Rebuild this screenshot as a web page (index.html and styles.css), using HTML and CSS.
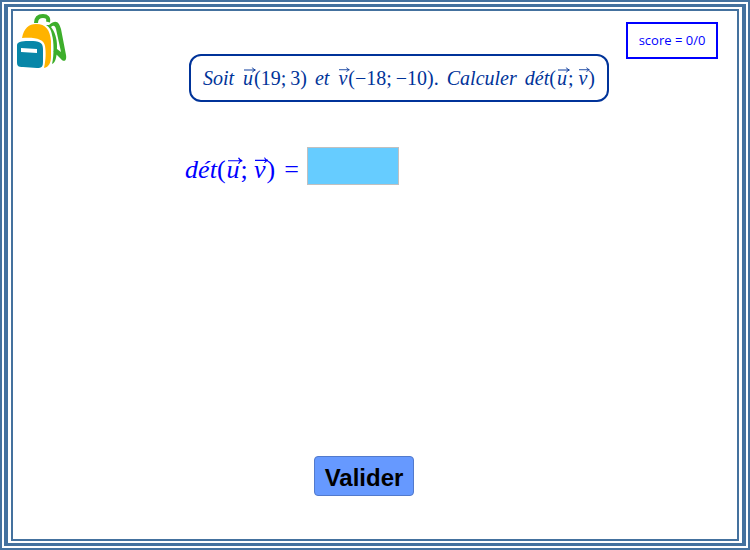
FILE: index.html
```html
<!DOCTYPE html>
<html lang="fr">
<head>
<meta charset="utf-8">
<title>Déterminant de deux vecteurs</title>
<link rel="stylesheet" href="styles.css">
</head>
<body>
<div class="frame"><div class="frame-band">
<main class="sheet">
  <header class="top">
    <svg class="logo" viewBox="0 0 52 58" aria-hidden="true">
      <path d="M20 11C20 6 23 4 27 4C31 4 33 6 32 10" fill="none" stroke="#3dae2b" stroke-width="4"/>
      <path d="M33 13C40 7 43 10 45 17L50 43C51 49 48 51 44 46L37 39L41 37L45 40L40 17C39 13 37 13 35 15C39 20 41 27 41 34C41 43 40 51 36 52C38 44 38 29 36 23C35 17 33 15 30 13Z" fill="#3dae2b"/>
      <path d="M6 26C8 16 13 12 20 12C30 12 34 18 35 29L35 44C35 51 33 55 28 56C30 47 30 40 29 34C28 27 19 25 6 26Z" fill="#ffb300"/>
      <path d="M1 33C1 29 9 29 14 29C23 29 27 30 27 37L27 49C27 55 26 56 21 56L7 55C2 55 1 54 1 50Z" fill="#0786a8"/>
      <path d="M5 36L21 37L21 41L5 40Z" fill="#fff"/>
    </svg>
    <h1 class="question">
      <span>Soit</span>
      <span><span class="vec">u<svg viewBox="0 0 10 5" aria-hidden="true"><path d="M0 2.500H9M7 .5Q7.500 2 9.500 2.500Q7.500 3 7 4.500"/></svg></span><span class="num">(19;&thinsp;3)</span></span>
      <span>et</span>
      <span><span class="vec">v<svg viewBox="0 0 10 5" aria-hidden="true"><path d="M0 2.500H9M7 .5Q7.500 2 9.500 2.500Q7.500 3 7 4.500"/></svg></span><span class="num">(−18;&thinsp;−10).</span></span>
      <span>Calculer</span>
      <span>dét<span class="num">(</span><span class="vec">u<svg viewBox="0 0 10 5" aria-hidden="true"><path d="M0 2.500H9M7 .5Q7.500 2 9.500 2.500Q7.500 3 7 4.500"/></svg></span><span class="num">;&thinsp;</span><span class="vec">v<svg viewBox="0 0 10 5" aria-hidden="true"><path d="M0 2.500H9M7 .5Q7.500 2 9.500 2.500Q7.500 3 7 4.500"/></svg></span><span class="num">)</span></span>
    </h1>
    <p class="score">score = 0/0</p>
  </header>
  <form class="exercise">
    <div class="answer">
      <label class="formula" for="det"><span>dét<span class="num">(</span><span class="vec">u<svg viewBox="0 0 10 5" aria-hidden="true"><path d="M0 2.500H9M7 .5Q7.500 2 9.500 2.500Q7.500 3 7 4.500"/></svg></span><span class="num">;&thinsp;</span><span class="vec">v<svg viewBox="0 0 10 5" aria-hidden="true"><path d="M0 2.500H9M7 .5Q7.500 2 9.500 2.500Q7.500 3 7 4.500"/></svg></span><span class="num">)</span></span><span class="num">=</span></label>
      <input class="field" id="det" type="text" autocomplete="off">
    </div>
    <button class="submit" type="button">Valider</button>
  </form>
</main>
</div></div>
</body>
</html>
```
FILE: styles.css
```css
* { box-sizing: border-box; }

body { margin: 0; background: #fff; }

/* Triple rule around the whole page */
.frame,
.frame-band,
.sheet {
  display: flex;
  flex-direction: column;
  border: 2px solid #44719e;
}

.frame { min-height: 100vh; padding: 2px; }

.frame-band {
  flex: 1;
  border-width: 3px 4px;
  padding: 2px 3px;
}

.sheet {
  flex: 1;
  padding: 1px 19px 43px 3px;
}

.top {
  display: grid;
  grid-template-columns: 52px 1fr 92px;
  align-items: start;
}

.logo { width: 52px; height: 58px; }

.question {
  display: flex;
  justify-self: end;
  align-items: center;
  gap: 8px;
  height: 48px;
  margin: 42px 17px 0 0;
  padding: 0 12px;
  border: 2px solid #003399;
  border-radius: 12px;
  color: #003399;
  font: italic 20px/24px "Liberation Serif", serif;
  white-space: nowrap;
}

.num { font-style: normal; }

.vec { position: relative; display: inline-block; padding: 0 1px; }

.vec svg {
  position: absolute;
  left: 15%;
  top: 5%;
  width: 100%;
  fill: none;
  stroke: currentColor;
  stroke-width: 0.8;
}

.score {
  margin: 10px 0 0;
  border: 2px solid #0000ff;
  color: #0000ff;
  font: 13px/33px "Open Sans", sans-serif;
  text-align: center;
}

.exercise {
  display: flex;
  flex: 1;
  flex-direction: column;
  justify-content: space-between;
  align-items: center;
  padding-top: 44px;
}

.answer {
  display: flex;
  align-items: center;
  margin-right: 150px;
  gap: 8px;
}

.formula {
  display: flex;
  gap: 9px;
  padding-top: 9px;
  color: #0000ff;
  font: italic 26px/30px "Liberation Serif", serif;
}

.field {
  width: 92px;
  height: 38px;
  padding: 0 8px;
  border: 1px solid #c0c0c0;
  background: #66ccff;
  font: 24px "Liberation Serif", serif;
}

.submit {
  width: 100px;
  height: 40px;
  margin-right: 6px;
  padding: 4px 0 0;
  border: 1px solid #527acc;
  border-radius: 4px;
  background: #6699ff;
  color: #000;
  font: bold 24px/30px "Liberation Sans", sans-serif;
}
```
